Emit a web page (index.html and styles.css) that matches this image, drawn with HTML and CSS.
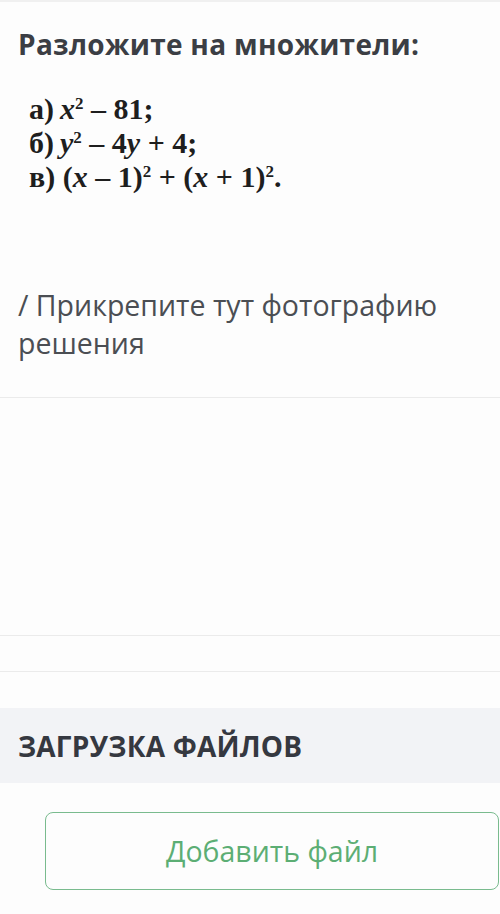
FILE: index.html
```html
<!DOCTYPE html>
<html lang="ru">
<head>
<meta charset="utf-8">
<link rel="stylesheet" href="styles.css">
</head>
<body>
<div class="page">
  <section class="question">
    <h1 class="title">Разложите на множители:</h1>
    <div class="task">
      <div class="row">а)&#8201;<i>x</i><sup>2</sup> – 81;</div>
      <div class="row">б)&#8201;<i>y</i><sup>2</sup> – 4<i>y</i> + 4;</div>
      <div class="row">в) (<i>x</i> – 1)<sup>2</sup> + (<i>x</i> + 1)<sup>2</sup>.</div>
    </div>
    <p class="hint">/ Прикрепите тут фотографию решения</p>
  </section>
  <div class="answer-area"></div>
  <div class="spacer-row"></div>
  <section class="upload">
    <h2 class="upload-title">ЗАГРУЗКА ФАЙЛОВ</h2>
  </section>
  <div class="actions">
    <button class="add-btn">Добавить файл</button>
  </div>
</div>
</body>
</html>
```
FILE: styles.css
```css
* { box-sizing: border-box; }
html, body { margin: 0; padding: 0; background: #fdfdfd; }
body { font-family: "Open Sans", "Noto Sans", sans-serif; width: 500px; height: 914px; overflow: hidden; }
.page { border-top: 2px solid #f0f0f0; }
.question { padding: 0 18px; border-bottom: 1px solid #ebebeb; height: 396px; }
.title { margin: 0; padding-top: 22px; font-size: 28px; line-height: 40px; font-weight: 700; color: #3b3e44; letter-spacing: 0.3px; }
.task { margin: 28px 0 0 11px; font-family: "Liberation Serif", "Times New Roman", serif; font-weight: 700; font-size: 30px; line-height: 34px; color: #1e1e1e; }
.task i { font-style: italic; font-weight: 700; }
.task sup { font-size: 17px; line-height: 0; vertical-align: 10px; }
.hint { margin: 92px 0 0; font-size: 28.5px; line-height: 38px; color: #4b4e53; }
.answer-area { height: 238px; border-bottom: 1px solid #ebebeb; }
.spacer-row { height: 36px; border-bottom: 1px solid #ebebeb; }
.upload { margin-top: 36px; background: #f2f3f6; height: 75px; padding: 0 18px; display: flex; align-items: center; }
.upload-title { margin: 0; font-size: 28px; font-weight: 700; color: #353840; letter-spacing: 0.2px; }
.actions { padding: 29px 1px 0 45px; }
.add-btn { display: block; width: 100%; height: 78px; border: 1.5px solid #79bb8e; border-radius: 8px; background: #fdfdfd; color: #5cae74; font-family: "Open Sans", "Noto Sans", sans-serif; font-size: 28.5px; }
```
